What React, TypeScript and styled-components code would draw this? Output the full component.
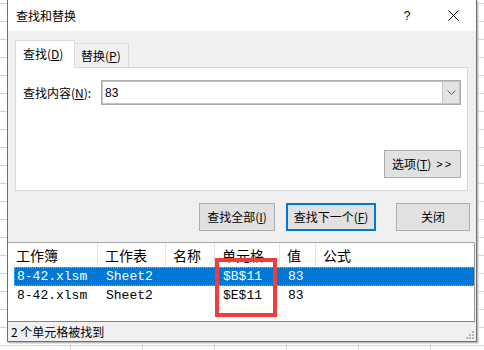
import React from 'react';
import styled, { createGlobalStyle } from 'styled-components';

const Global = createGlobalStyle`
  html, body { margin: 0; padding: 0; }
  body {
    width: 484px; height: 350px; overflow: hidden;
    font-family: "Noto Sans CJK SC", "Noto Sans", sans-serif;
    color: #000;
  }
  * { box-sizing: border-box; }
`;

const Desktop = styled.div`
  width: 484px;
  height: 350px;
  overflow: hidden;
  padding-left: 7px;
  background-color: #fff;
  background-image:
    linear-gradient(to bottom, #d4d4d4 1px, transparent 1px),
    linear-gradient(to right, #d4d4d4 1px, transparent 1px);
  background-size: 72px 18px;
  background-position: -2px 3px;
`;

const Dialog = styled.div`
  width: 470px;
  height: 342px;
  border: 1px solid #6f6f6f;
  border-top: none;
  background: #f0f0f0;
  box-shadow: 1px 1px 0 #bdbdbd, 2px 2px 0 #e2e2e2;
  display: flex;
  flex-direction: column;
`;

const TitleBar = styled.div`
  height: 31px;
  background: #fff;
  display: flex;
  align-items: center;
  padding-left: 8px;
  flex-shrink: 0;
`;

const Title = styled.div`
  font-size: 12px;
  line-height: 16px;
  flex: 1;
`;

const CaptionButton = styled.div`
  width: 46px;
  height: 31px;
  display: flex;
  align-items: center;
  justify-content: center;
  font-family: "Liberation Sans", sans-serif;
  font-size: 12px;
`;

const Body = styled.div`
  flex: 1;
  display: flex;
  flex-direction: column;
  padding-top: 9px;
  min-height: 0;
`;

const TabsArea = styled.div`
  padding: 0 8px 0 7px;
  display: flex;
  flex-direction: column;
`;

const TabRow = styled.div`
  display: flex;
  align-items: flex-end;
  height: 28px;
  margin-bottom: -1px;
  position: relative;
  z-index: 1;
`;

const Tab = styled.div<{ $active?: boolean; $w: number }>`
  width: ${p => p.$w}px;
  height: ${p => (p.$active ? 28 : 25)}px;
  border: 1px solid #d9d9d9;
  border-bottom: ${p => (p.$active ? 'none' : '1px solid #d9d9d9')};
  border-left: ${p => (p.$active ? '1px solid #d9d9d9' : 'none')};
  background: ${p => (p.$active ? '#fff' : '#f0f0f0')};
  font-size: 12px;
  line-height: 16px;
  display: flex;
  align-items: center;
  padding-left: ${p => (p.$active ? 7 : 6)}px;
  padding-bottom: ${p => (p.$active ? 1 : 0)}px;
`;

const Panel = styled.div`
  height: 124px;
  background: #fff;
  border: 1px solid #d9d9d9;
  display: flex;
  flex-direction: column;
  justify-content: space-between;
  padding: 12px 6px 12px 7px;
`;

const FieldRow = styled.div`
  display: flex;
  align-items: center;
  height: 25px;
`;

const Label = styled.div`
  width: 78px;
  font-size: 12px;
  line-height: 16px;
  padding-top: 1px;
`;

const Combo = styled.div`
  flex: 1;
  height: 25px;
  border: 1px solid #ababab;
  box-shadow: inset 0 0 0 1px #c4c4c4;
  display: flex;
  align-items: stretch;
`;

const ComboText = styled.div`
  flex: 1;
  font-family: "Liberation Sans", sans-serif;
  font-size: 12px;
  display: flex;
  align-items: center;
  padding-left: 3px;
`;

const ComboArrow = styled.div`
  width: 17px;
  background: #e3e3e3;
  border-left: 1px solid #c8c8c8;
  margin: 1px;
  margin-left: 0;
  display: flex;
  align-items: center;
  justify-content: center;
`;

const OptionsRow = styled.div`
  display: flex;
  justify-content: flex-end;
`;

const Button = styled.div<{ $w: number; $primary?: boolean; $ml?: number }>`
  width: ${p => p.$w}px;
  height: 28px;
  margin-left: ${p => p.$ml ?? 0}px;
  background: #e1e1e1;
  border: ${p => (p.$primary ? '2px solid #0078d7' : '1px solid #adadad')};
  display: flex;
  align-items: center;
  justify-content: center;
  font-size: 12px;
  line-height: 16px;
  white-space: pre;
`;

const Chevrons = styled.span`
  font-family: "Liberation Sans", sans-serif;
  font-size: 11px;
  letter-spacing: 2px;
  margin-left: 5px;
`;

const ButtonRow = styled.div`
  display: flex;
  justify-content: flex-end;
  margin-top: 12px;
  padding-right: 6px;
`;

const ResultList = styled.div`
  position: relative;
  margin-top: 11px;
  height: 80px;
  margin-right: 1px;
  background: #fff;
  border-top: 1px solid #a9a9a9;
  border-right: 1px solid #9b9b9b;
  border-bottom: 1px solid #838383;
`;

const HeaderRow = styled.div`
  display: flex;
  height: 24px;
`;

const HeaderCell = styled.div<{ $w?: number; $pl?: number }>`
  ${p => (p.$w ? `width: ${p.$w}px;` : 'flex: 1;')}
  padding-left: ${p => p.$pl ?? 7}px;
  border-right: ${p => (p.$w ? '1px solid #e5e5e5' : 'none')};
  font-size: 14px;
  line-height: 20px;
  display: flex;
  align-items: center;
  padding-bottom: 1px;
`;

const Row = styled.div<{ $selected?: boolean }>`
  display: flex;
  height: 19px;
  margin-left: 6px;
  background: ${p => (p.$selected ? '#0078d7' : 'transparent')};
  color: ${p => (p.$selected ? '#fff' : '#000')};
  border: 1px dotted ${p => (p.$selected ? '#d7a35c' : 'transparent')};
  border-right: none;
`;

const Cell = styled.div<{ $w?: number; $pl?: number }>`
  ${p => (p.$w ? `width: ${p.$w}px;` : 'flex: 1;')}
  padding-left: ${p => p.$pl ?? 7}px;
  font-family: "Liberation Mono", monospace;
  font-size: 13px;
  line-height: 17px;
  white-space: pre;
`;

const Highlight = styled.div`
  position: absolute;
  left: 207px;
  top: 15px;
  width: 62px;
  height: 59px;
  border: 4px solid #f23d3d;
  pointer-events: none;
`;

const StatusBar = styled.div`
  flex: 1;
  display: flex;
  align-items: center;
  padding-left: 3px;
  font-size: 12px;
  line-height: 16px;
  position: relative;
  white-space: pre;
`;

const Grip = styled.svg`
  position: absolute;
  right: 1px;
  bottom: 1px;
`;

const cols = [84, 68, 49, 65, 36];

export default function App() {
  return (
    <>
      <Global />
      <Desktop>
        <Dialog>
          <TitleBar>
            <Title>查找和替换</Title>
            <CaptionButton>?</CaptionButton>
            <CaptionButton>
              <svg width="11" height="11" viewBox="0 0 11 11">
                <path d="M0.5 0.5 L10.5 10.5 M10.5 0.5 L0.5 10.5" stroke="#000" strokeWidth="1" fill="none" />
              </svg>
            </CaptionButton>
          </TitleBar>
          <Body>
            <TabsArea>
              <TabRow>
                <Tab $active $w={60}>查找(<u>D</u>)</Tab>
                <Tab $w={54}>替换(<u>P</u>)</Tab>
              </TabRow>
              <Panel>
                <FieldRow>
                  <Label>查找内容(<u>N</u>):</Label>
                  <Combo>
                    <ComboText>83</ComboText>
                    <ComboArrow>
                      <svg width="9" height="5" viewBox="0 0 9 5">
                        <path d="M0.5 0.5 L4.5 4.5 L8.5 0.5" stroke="#5a5a5a" strokeWidth="1" fill="none" />
                      </svg>
                    </ComboArrow>
                  </Combo>
                </FieldRow>
                <OptionsRow>
                  <Button $w={77}>选项(<u>T</u>)<Chevrons>&gt;&gt;</Chevrons></Button>
                </OptionsRow>
              </Panel>
            </TabsArea>
            <ButtonRow>
              <Button $w={76}>查找全部(<u>I</u>)</Button>
              <Button $w={90} $primary $ml={11}>查找下一个(<u>F</u>)</Button>
              <Button $w={74} $ml={20}>关闭</Button>
            </ButtonRow>
            <ResultList>
              <HeaderRow>
                <HeaderCell $w={90} $pl={8}>工作簿</HeaderCell>
                <HeaderCell $w={68}>工作表</HeaderCell>
                <HeaderCell $w={49}>名称</HeaderCell>
                <HeaderCell $w={65}>单元格</HeaderCell>
                <HeaderCell $w={36}>值</HeaderCell>
                <HeaderCell>公式</HeaderCell>
              </HeaderRow>
              <Row $selected>
                <Cell $w={cols[0]} $pl={2}>8-42.xlsm</Cell>
                <Cell $w={cols[1]}>Sheet2</Cell>
                <Cell $w={cols[2]}></Cell>
                <Cell $w={cols[3]}>$B$11</Cell>
                <Cell $w={cols[4]}>83</Cell>
                <Cell></Cell>
              </Row>
              <Row>
                <Cell $w={cols[0]} $pl={2}>8-42.xlsm</Cell>
                <Cell $w={cols[1]}>Sheet2</Cell>
                <Cell $w={cols[2]}></Cell>
                <Cell $w={cols[3]}>$E$11</Cell>
                <Cell $w={cols[4]}>83</Cell>
                <Cell></Cell>
              </Row>
              <Highlight />
            </ResultList>
            <StatusBar>
              2 个单元格被找到
              <Grip width="9" height="9" viewBox="0 0 9 9">
                {[[6, 0], [3, 3], [6, 3], [0, 6], [3, 6], [6, 6]].map(([x, y], i) => (
                  <rect key={i} x={x} y={y} width="2" height="2" fill="#b5b5b5" />
                ))}
              </Grip>
            </StatusBar>
          </Body>
        </Dialog>
      </Desktop>
    </>
  );
}
